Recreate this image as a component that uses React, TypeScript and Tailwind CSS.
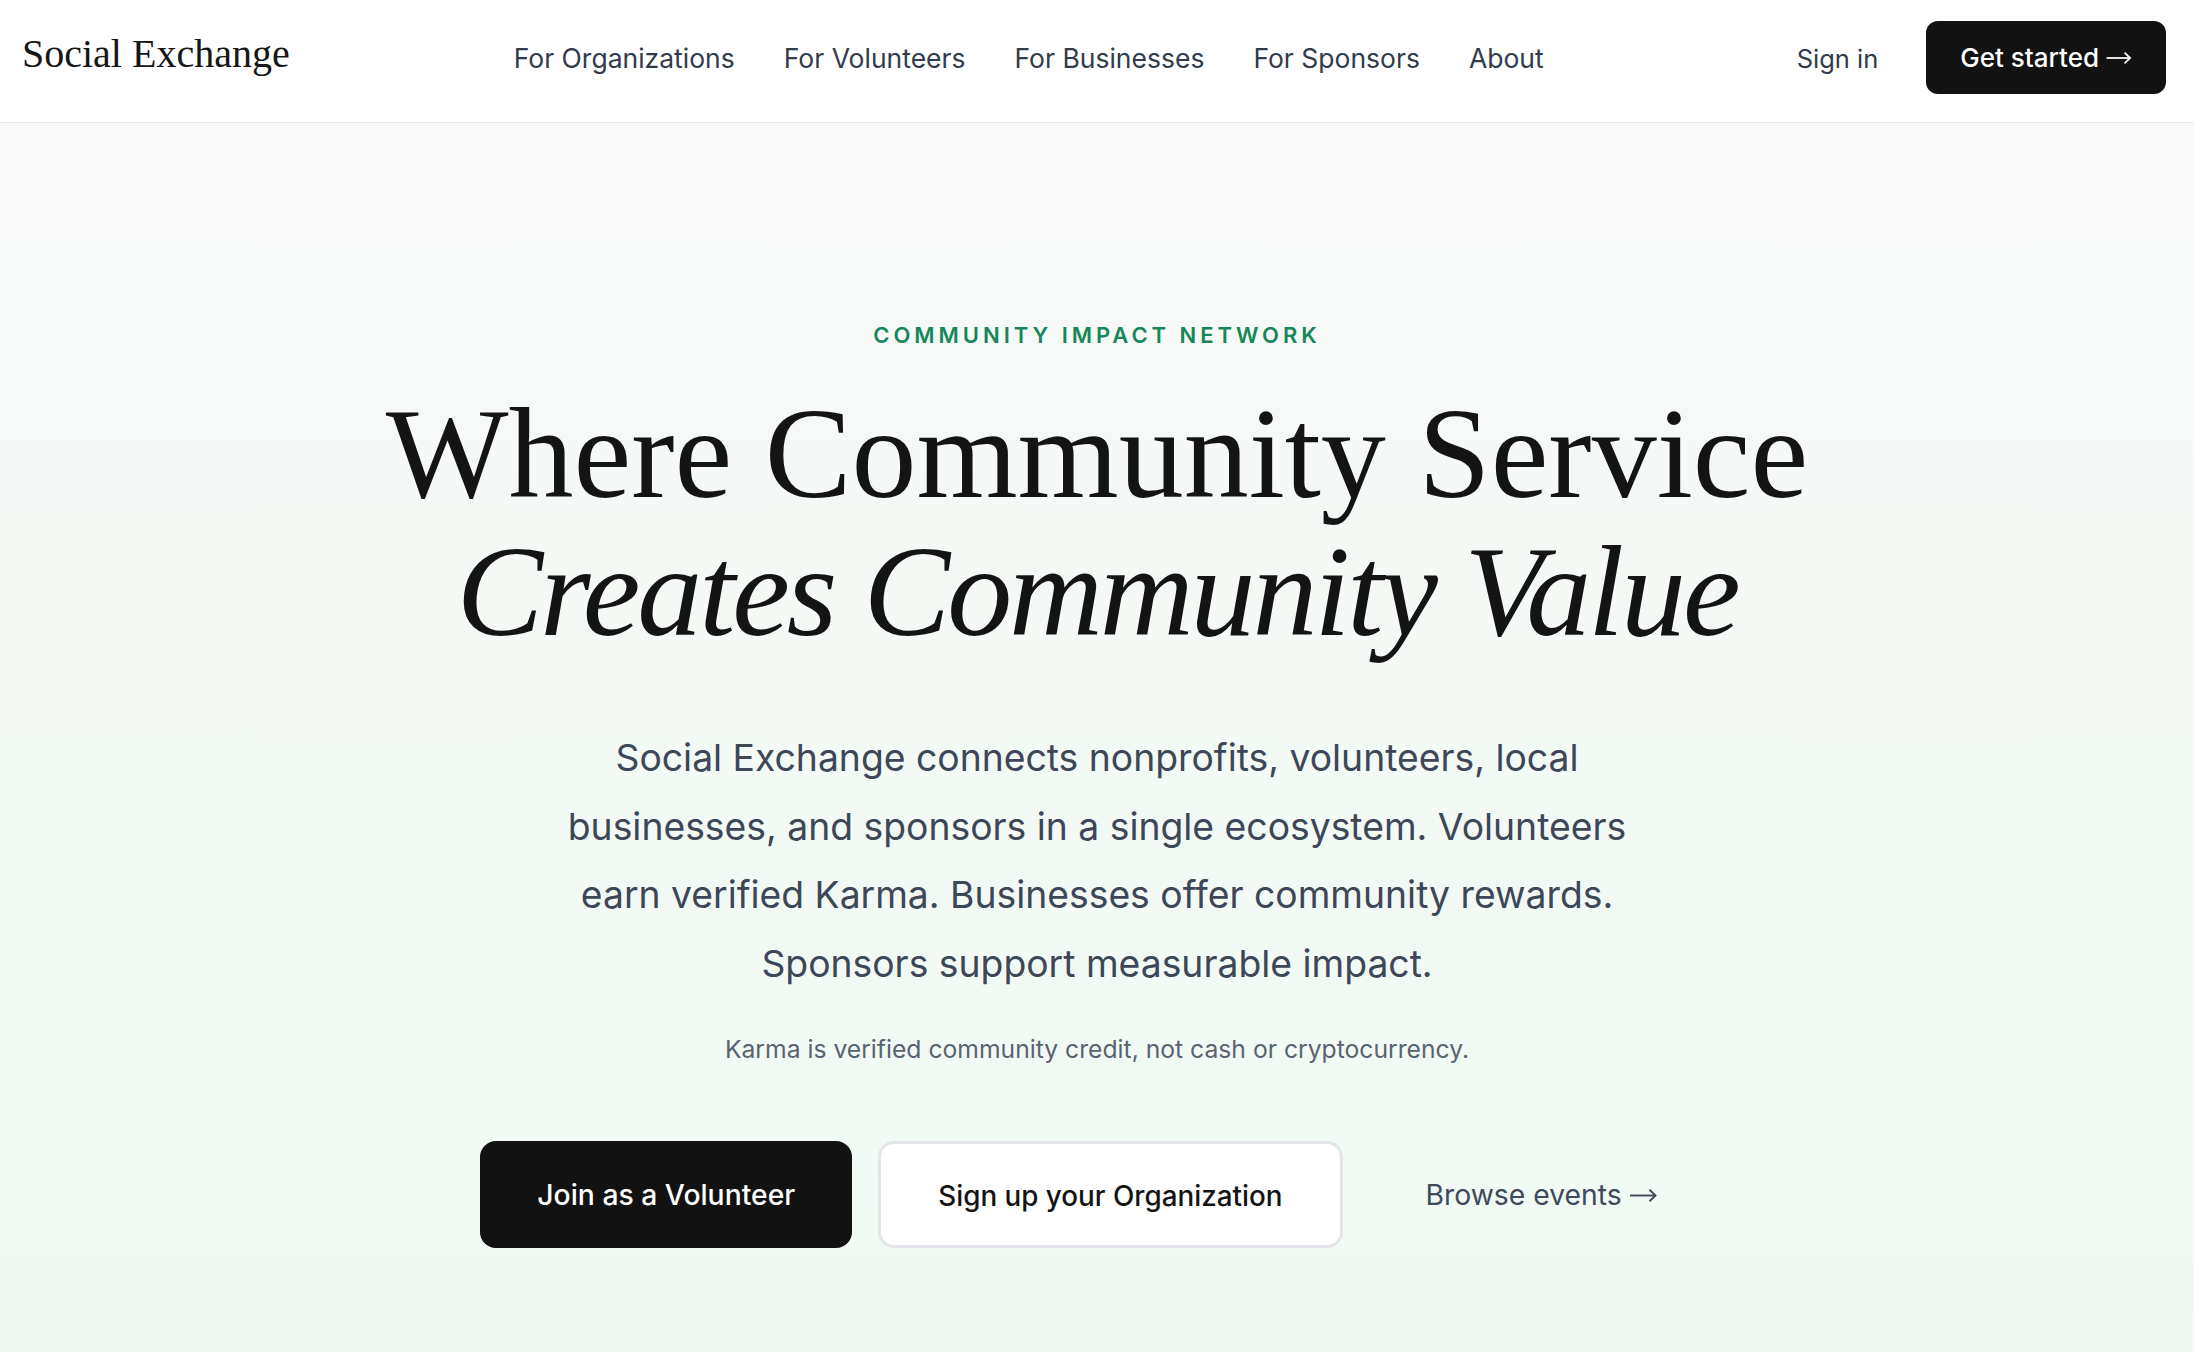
import { ReactNode } from 'react';

const navLinks = ['For Organizations', 'For Volunteers', 'For Businesses', 'For Sponsors', 'About'];

const sans = "font-['Inter',sans-serif]";
const serif = "font-['Liberation_Serif',serif]";

// long thin arrow used after call-to-action labels
const Arrow = ({ className = '' }: { className?: string }) => (
  <svg viewBox="0 0 27 13" fill="none" stroke="currentColor" strokeWidth={1.9} className={className}>
    <path d="M0 6.5h25.5" />
    <path d="M19.5 0.8l6 5.7-6 5.7" strokeLinejoin="miter" />
  </svg>
);

const Header = () => (
  <header className={`flex h-[123px] items-center border-b border-[#e5e7eb] bg-white pb-[4px] pl-[22px] pr-[28px] ${sans}`}>
    <a href="#" className={`${serif} mb-[10px] text-[40px] leading-none text-[#161616]`}>
      Social Exchange
    </a>
    <nav className="ml-[224px] flex items-center gap-[49px] text-[26.5px] text-[#313b4b]">
      {navLinks.map((link) => (
        <a key={link} href="#">
          {link}
        </a>
      ))}
    </nav>
    <div className="ml-auto flex items-center gap-[48px]">
      <a href="#" className="text-[25.5px] text-[#313b4b]">
        Sign in
      </a>
      <button className="mb-[4px] flex h-[73px] items-center gap-[7px] rounded-[12px] bg-[#121212] px-[34px] text-[26px] font-medium text-white">
        Get started <Arrow className="mt-[2px] h-[12px] w-[26px]" />
      </button>
    </div>
  </header>
);

const CtaButton = ({ children, variant }: { children: ReactNode; variant: 'dark' | 'light' | 'link' }) => {
  const styles = {
    dark: 'bg-[#121212] text-white text-[28.3px]',
    light: 'border-[3px] border-[#e3e5ea] bg-white text-[#141414] text-[27.8px] pt-[4px]',
    link: 'text-[#404a5a] font-normal text-[28.3px]',
  };
  return (
    <a
      href="#"
      className={`flex h-[107px] items-center justify-center gap-[8px] rounded-[16px] px-[57px] font-medium ${styles[variant]}`}
    >
      {children}
    </a>
  );
};

export default function App() {
  return (
    <div className={`min-h-screen bg-white ${sans}`}>
      <Header />
      <section className="flex min-h-[1400px] flex-col items-center bg-gradient-to-b from-[#f8f9f8] to-[#eefaf2] pt-[196px] text-center">
        <p className="text-[22px] font-semibold leading-[32px] tracking-[0.18em] text-[#15875a]">
          COMMUNITY IMPACT NETWORK
        </p>
        <h1 className={`${serif} mt-[33px] text-[130px] leading-[138px] text-[#141414]`}>
          Where Community Service
          <br />
          <em className="tracking-[-0.024em]">Creates Community Value</em>
        </h1>
        <p className="mt-[64px] max-w-[1100px] text-[37.3px] leading-[68.6px] text-[#3d4757]">
          Social Exchange connects nonprofits, volunteers, local businesses, and sponsors in a single ecosystem.
          Volunteers earn verified Karma. Businesses offer community rewards. Sponsors support measurable impact.
        </p>
        <p className="mt-[33px] text-[24.7px] leading-[36px] text-[#5a6372]">
          Karma is verified community credit, not cash or cryptocurrency.
        </p>
        <div className="mt-[74px] flex items-center gap-[26px]">
          <CtaButton variant="dark">Join as a Volunteer</CtaButton>
          <CtaButton variant="light">Sign up your Organization</CtaButton>
          <CtaButton variant="link">
            Browse events <Arrow className="mt-[1px] h-[13px] w-[27px]" />
          </CtaButton>
        </div>
      </section>
    </div>
  );
}
